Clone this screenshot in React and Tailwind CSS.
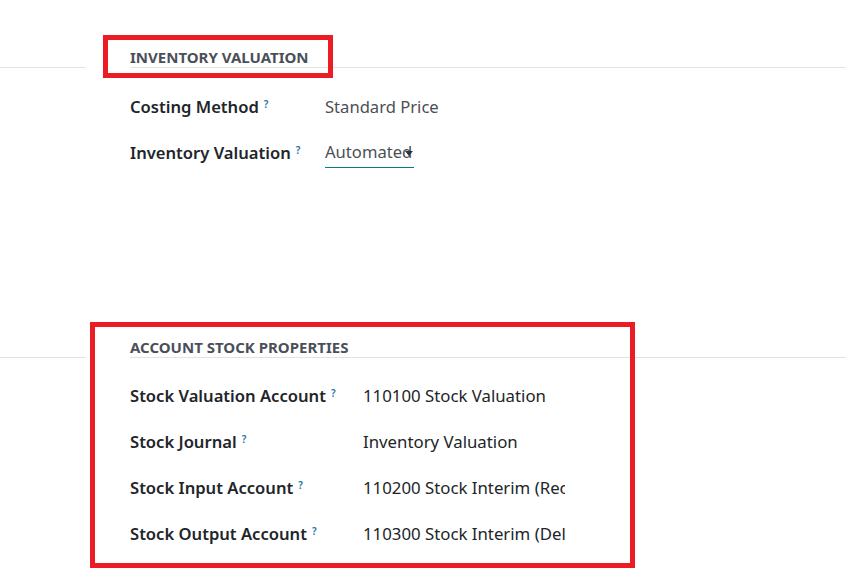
import React from "react";

const font = { fontFamily: '"Noto Sans", "Open Sans", sans-serif' };

const Help = () => (
  <sup className="ml-[5px] text-[10px] font-semibold text-[#1f74a8] relative -top-[5px]">?</sup>
);

const Row = ({ label, children, labelWidth }) => (
  <div className="flex h-[46px] items-center">
    <div className={`${labelWidth} shrink-0 text-[16.6px] font-semibold text-[#212529] whitespace-nowrap`}>
      {label}
      <Help />
    </div>
    {children}
  </div>
);

const SectionTitle = ({ title }) => (
  <div className="flex">
    <div className="w-[86px] shrink-0 border-b border-[#e2e2e2]" />
    <div className="ml-[44px] flex-1 border-b border-[#e2e2e2] pt-[10px]">
      <div className="h-[20px] text-[15px] leading-[20px] font-bold text-[#4a4f59]">
        {title}
      </div>
    </div>
  </div>
);

const Value = ({ children }) => (
  <span className="w-[202px] overflow-hidden whitespace-nowrap text-[16.8px] text-[#212529]">
    {children}
  </span>
);

const App = () => {
  return (
    <div className="w-[851px] h-[578px] bg-white overflow-hidden relative pr-[5px]" style={font}>
      {/* inventory valuation */}
      <div className="pt-[37px]">
        <SectionTitle title="INVENTORY VALUATION" />
        <div className="pl-[130px] mt-[16px]">
          <Row label="Costing Method" labelWidth="w-[195px]">
            <span className="text-[16.6px] text-[#4c4f55]">Standard Price</span>
          </Row>
          <Row label="Inventory Valuation" labelWidth="w-[195px]">
            <div className="relative w-[89px] border-b border-[#017e84] h-[28px] mt-[2px]">
              <span className="text-[16.6px] leading-[24px] text-[#4c4f55] whitespace-nowrap">
                Automated
              </span>
              <svg
                className="absolute right-[1px] top-[11px]"
                width="8"
                height="6"
                viewBox="0 0 8 6"
              >
                <path d="M0 0h8L4 5z" fill="#333" />
              </svg>
            </div>
          </Row>
        </div>
      </div>

      {/* account stock properties */}
      <div className="mt-[151px]">
        <SectionTitle title="ACCOUNT STOCK PROPERTIES" />
        <div className="pl-[130px] mt-[15px]">
          <Row label="Stock Valuation Account" labelWidth="w-[233px]">
            <Value>110100 Stock Valuation</Value>
          </Row>
          <Row label="Stock Journal" labelWidth="w-[233px]">
            <Value>Inventory Valuation</Value>
          </Row>
          <Row label="Stock Input Account" labelWidth="w-[233px]">
            <Value>110200 Stock Interim (Received)</Value>
          </Row>
          <Row label="Stock Output Account" labelWidth="w-[233px]">
            <Value>110300 Stock Interim (Delivered)</Value>
          </Row>
        </div>
      </div>

      {/* annotation boxes */}
      <div className="absolute left-[103px] top-[35px] w-[230px] h-[43px] border-[5px] border-[#ec1c24]" />
      <div className="absolute left-[90px] top-[322px] w-[545px] h-[246px] border-[5px] border-[#ec1c24]" />
    </div>
  );
};

export default App;
